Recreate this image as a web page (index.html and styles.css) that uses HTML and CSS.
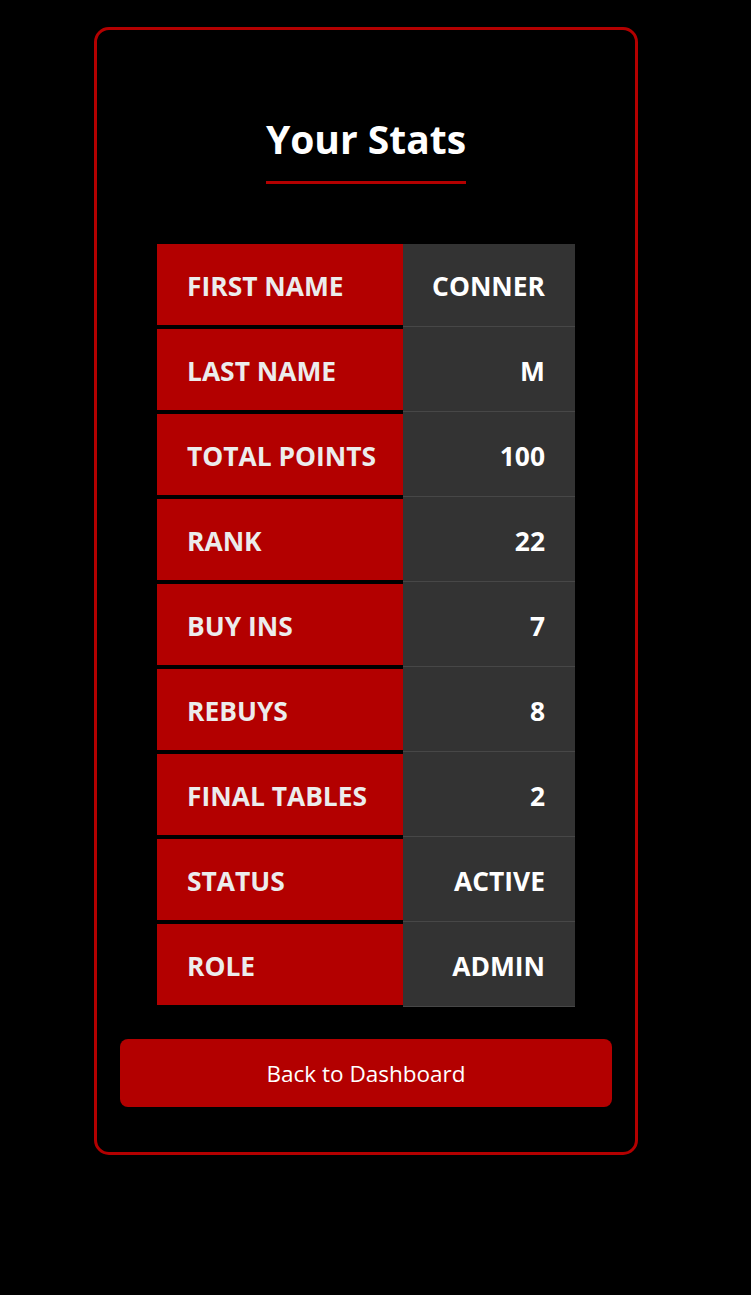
FILE: index.html
```html
<!DOCTYPE html>
<html lang="en">
<head>
<meta charset="utf-8">
<title>Your Stats</title>
<link rel="stylesheet" href="styles.css">
</head>
<body>
<div class="page">
  <div class="card">
    <div class="title-wrap"><h2 class="title">Your Stats</h2></div>
    <div class="stats">
      <div class="row"><div class="label">First Name</div><div class="value">Conner</div></div>
      <div class="row"><div class="label">Last Name</div><div class="value">M</div></div>
      <div class="row"><div class="label">Total Points</div><div class="value">100</div></div>
      <div class="row"><div class="label">Rank</div><div class="value">22</div></div>
      <div class="row"><div class="label">Buy Ins</div><div class="value">7</div></div>
      <div class="row"><div class="label">Rebuys</div><div class="value">8</div></div>
      <div class="row"><div class="label">Final Tables</div><div class="value">2</div></div>
      <div class="row"><div class="label">Status</div><div class="value">Active</div></div>
      <div class="row"><div class="label">Role</div><div class="value">Admin</div></div>
    </div>
    <button class="back-btn" type="button">Back to Dashboard</button>
  </div>
</div>
</body>
</html>
```
FILE: styles.css
```css
* { box-sizing: border-box; }
html, body {
  margin: 0;
  background: #000;
  font-family: "Open Sans", "Noto Sans", sans-serif;
}
.page {
  width: 732px;
  padding-top: 27px;
}
.card {
  width: 544px;
  margin: 0 auto;
  border: 3px solid #b30000;
  border-radius: 15px;
  padding: 0 23px 45px;
  display: flex;
  flex-direction: column;
  align-items: center;
}
.title-wrap {
  margin-top: 84px;
  display: flex;
  justify-content: center;
}
.title {
  margin: 0;
  color: #fff;
  font-size: 39px;
  font-weight: 700;
  line-height: 50px;
  padding-bottom: 17px;
  border-bottom: 3px solid #b30000;
}
.stats {
  margin-top: 60px;
  width: 418px;
  display: flex;
  flex-direction: column;
}
.row {
  display: flex;
  height: 85px;
  align-items: flex-start;
}
.label {
  width: 246px;
  height: 81px;
  background: #b30000;
  color: #ececec;
  font-size: 26.4px;
  font-weight: 700;
  text-transform: uppercase;
  padding-left: 30px;
  padding-top: 2px;
  display: flex;
  align-items: center;
}
.value {
  width: 172px;
  height: 85px;
  margin-top: -2px;
  background: #333;
  border-bottom: 1px solid #474747;
  color: #fff;
  font-size: 26.4px;
  font-weight: 700;
  text-transform: uppercase;
  padding-right: 30px;
  padding-top: 4px;
  display: flex;
  align-items: center;
  justify-content: flex-end;
}
.row:first-child .value {
  margin-top: 0;
  height: 83px;
  padding-top: 2px;
}
.back-btn {
  margin-top: 30px;
  width: 100%;
  height: 68px;
  border: 0;
  border-radius: 8px;
  background: #b30000;
  color: #fff;
  font-family: "Open Sans", "Noto Sans", sans-serif;
  font-size: 22.5px;
  font-weight: 400;
  padding-top: 2px;
  cursor: pointer;
}
```
